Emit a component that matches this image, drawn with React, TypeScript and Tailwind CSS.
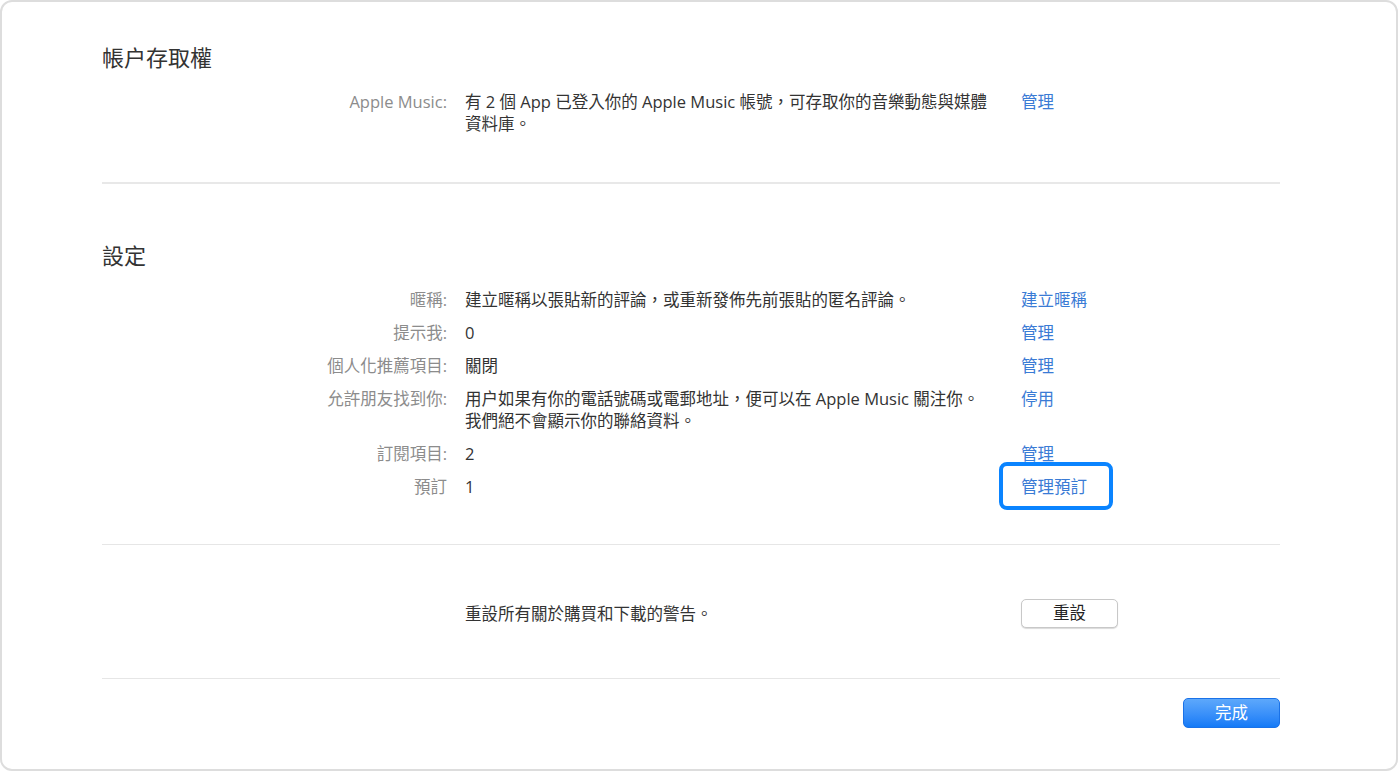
import React from "react";

const font = { fontFamily: '"Open Sans", "Noto Sans CJK TC", sans-serif' };

type Row = { label: string; value: React.ReactNode; action?: string; highlight?: boolean };

const settings: Row[] = [
  { label: "暱稱:", value: "建立暱稱以張貼新的評論，或重新發佈先前張貼的匿名評論。", action: "建立暱稱" },
  { label: "提示我:", value: "0", action: "管理" },
  { label: "個人化推薦項目:", value: "關閉", action: "管理" },
  {
    label: "允許朋友找到你:",
    value: (
      <>
        用户如果有你的電話號碼或電郵地址，便可以在 Apple Music 關注你。
        <br />
        我們絕不會顯示你的聯絡資料。
      </>
    ),
    action: "停用",
  },
  { label: "訂閱項目:", value: "2", action: "管理" },
  { label: "預訂", value: "1", action: "管理預訂", highlight: true },
];

function InfoRow({ row }: { row: Row }) {
  return (
    <div className="flex items-start py-[5.5px] leading-[22px] text-[16.5px]">
      <div className="w-[345px] shrink-0 text-right text-[#8c8c8c] whitespace-nowrap">{row.label}</div>
      <div className="ml-[18px] w-[536px] shrink-0 text-[#333333] whitespace-nowrap">{row.value}</div>
      <div className="ml-[20px]">
        <span className="relative inline-block">
          {row.highlight && (
            <span className="absolute left-[-22px] right-[-26px] top-[-14px] bottom-[-12px] rounded-[8px] border-[4px] border-[#0a84ff]" />
          )}
          <a className="text-[#3a7bd5] cursor-pointer">{row.action}</a>
        </span>
      </div>
    </div>
  );
}

export default function App() {
  return (
    <div className="w-[1400px] h-[772px] bg-white" style={font}>
      <div className="w-[1398px] h-[771px] rounded-[12px] border-2 border-[#dddddd] px-[100px] bg-white">
        <h2 className="pt-[40px] text-[22px] leading-[30px] text-[#333333]">帳户存取權</h2>
        <div className="mt-[13px] pb-[42px]">
          <InfoRow
            row={{
              label: "Apple Music:",
              value: (
                <>
                  有 2 個 App 已登入你的 Apple Music 帳號，可存取你的音樂動態與媒體
                  <br />
                  資料庫。
                </>
              ),
              action: "管理",
            }}
          />
        </div>
        <div className="h-[2px] bg-[#e8e8e8] w-[1178px]" />
        <h2 className="mt-[56px] text-[22px] leading-[30px] text-[#333333]">設定</h2>
        <div className="mt-[13px]">
          {settings.map((r) => (
            <InfoRow key={r.label} row={r} />
          ))}
        </div>
        <div className="mt-[41px] h-[1px] bg-[#e6e6e6] w-[1178px]" />
        <div className="flex items-center mt-[54px] text-[16.5px]">
          <div className="w-[345px] shrink-0" />
          <div className="ml-[18px] w-[536px] shrink-0 text-[#333333] leading-[23px]">重設所有關於購買和下載的警告。</div>
          <button className="ml-[20px] w-[97px] h-[29px] rounded-[5px] border border-[#c8c8c8] bg-white shadow-[0_1px_1px_rgba(0,0,0,0.15)] text-[16.5px] text-[#222222] leading-none">
            重設
          </button>
        </div>
        <div className="mt-[50px] h-[1px] bg-[#e6e6e6] w-[1178px]" />
        <div className="flex justify-end w-[1178px] mt-[19px]">
          <button className="w-[97px] h-[30px] rounded-[5px] border border-[#1a72e8] bg-gradient-to-b from-[#5da8fb] to-[#127af7] text-white text-[16.5px] leading-none">
            完成
          </button>
        </div>
      </div>
    </div>
  );
}
